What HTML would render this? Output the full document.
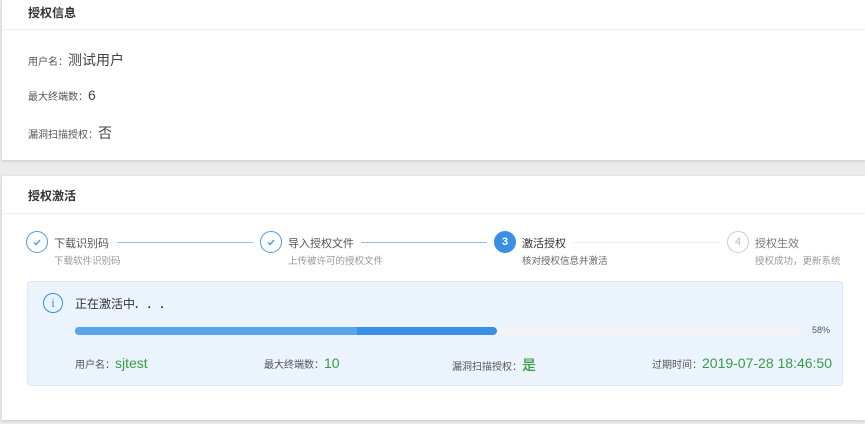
<!DOCTYPE html>
<html><head><meta charset="utf-8"><style>
*{margin:0;padding:0;box-sizing:border-box}
body{width:865px;height:424px;background:#ebebeb;font-family:"Liberation Sans","Noto Sans CJK SC",sans-serif;position:relative;overflow:hidden;color:#333}
.card{position:absolute;left:2px;right:0;background:#fff;box-shadow:0 1px 3px rgba(0,0,0,.15)}
.abs{position:absolute;white-space:nowrap}
.hd{font-size:12px;font-weight:bold;color:#333}
.lbl{font-size:10px;color:#555}
.c{position:absolute;width:22px;height:22px;border-radius:50%;border:1px solid #4a9be4;text-align:center;line-height:20px;font-size:11px}
.st{font-size:11px;color:#555}
.sub{font-size:9.5px;color:#999}
.ln{position:absolute;height:1px}
.g{color:#3a9a45;font-weight:500}
</style></head><body>
<div class="card" style="top:0;height:160px">
 <div class="abs hd" style="left:26px;top:4px">授权信息</div>
 <div style="position:absolute;left:0;right:0;top:29px;height:1px;background:#eee"></div>
 <div class="abs" style="left:26px;top:50px"><span class="lbl">用户名：</span><span style="font-size:14px;color:#444">测试用户</span></div>
 <div class="abs" style="left:26px;top:87px"><span class="lbl">最大终端数：</span><span style="font-size:14px;color:#444">6</span></div>
 <div class="abs" style="left:26px;top:123px"><span class="lbl">漏洞扫描授权：</span><span style="font-size:14px;color:#444">否</span></div>
</div>
<div class="card" style="top:176px;height:244px">
 <div class="abs hd" style="left:26px;top:11px">授权激活</div>
 <div style="position:absolute;left:0;right:0;top:37px;height:1px;background:#eee"></div>
</div>
<div class="c" style="left:26px;top:231px"><svg width="20" height="20" viewBox="0 0 20 20"><path d="M7 10.5l2 2 4-4.5" fill="none" stroke="#4a9be4" stroke-width="1.4"/></svg></div>
<div class="abs st" style="left:54px;top:235px">下载识别码</div>
<div class="abs sub" style="left:54px;top:253px">下载软件识别码</div>
<div class="ln" style="left:117px;width:136px;top:242px;background:#8fc0ef"></div>
<div class="c" style="left:260px;top:231px"><svg width="20" height="20" viewBox="0 0 20 20"><path d="M7 10.5l2 2 4-4.5" fill="none" stroke="#4a9be4" stroke-width="1.4"/></svg></div>
<div class="abs st" style="left:288px;top:235px">导入授权文件</div>
<div class="abs sub" style="left:288px;top:253px">上传被许可的授权文件</div>
<div class="ln" style="left:361px;width:126px;top:242px;background:#8fc0ef"></div>
<div class="c" style="left:494px;top:231px;background:#3a8ee6;border-color:#3a8ee6;color:#fff;font-weight:bold">3</div>
<div class="abs st" style="left:522px;top:235px;color:#333">激活授权</div>
<div class="abs sub" style="left:522px;top:253px;color:#666">核对授权信息并激活</div>
<div class="ln" style="left:573px;width:147px;top:242px;background:#eee"></div>
<div class="c" style="left:727px;top:231px;border-color:#ccc;color:#bbb">4</div>
<div class="abs st" style="left:755px;top:235px;color:#777">授权生效</div>
<div class="abs sub" style="left:755px;top:253px">授权成功，更新系统</div>

<div style="position:absolute;left:27px;top:281px;width:816px;height:105px;background:#ebf4fd;border:1px solid #d8e9f9;border-radius:3px"></div>
<div style="position:absolute;left:43px;top:293px;width:20px;height:20px;border:1.5px solid #3a8ee6;border-radius:50%;color:#3a8ee6;font-size:13px;text-align:center;line-height:17px;font-family:'Liberation Serif',serif">i</div>
<div class="abs" style="left:75px;top:295px;font-size:12px;color:#333">正在激活中<span style="letter-spacing:3px;font-weight:bold">. . .</span></div>
<div style="position:absolute;left:75px;top:327px;width:728px;height:8px;border-radius:4px;background:#f3f3f3"></div>
<div style="position:absolute;left:75px;top:327px;width:422px;height:8px;border-radius:4px;background:#3a8ee6"></div>
<div style="position:absolute;left:75px;top:327px;width:282px;height:8px;border-radius:4px 0 0 4px;background:#5aa4e8"></div>
<div class="abs" style="left:812px;top:325px;font-size:9px;color:#555">58%</div>
<div class="abs" style="left:75px;top:355px"><span class="lbl">用户名：</span><span class="g" style="font-size:14px">sjtest</span></div>
<div class="abs" style="left:264px;top:355px"><span class="lbl">最大终端数：</span><span class="g" style="font-size:14px">10</span></div>
<div class="abs" style="left:452px;top:355px"><span class="lbl">漏洞扫描授权：</span><span class="g" style="font-size:14px">是</span></div>
<div class="abs" style="left:652px;top:355px"><span class="lbl">过期时间：</span><span class="g" style="font-size:14px">2019-07-28 18:46:50</span></div>
</body></html>
